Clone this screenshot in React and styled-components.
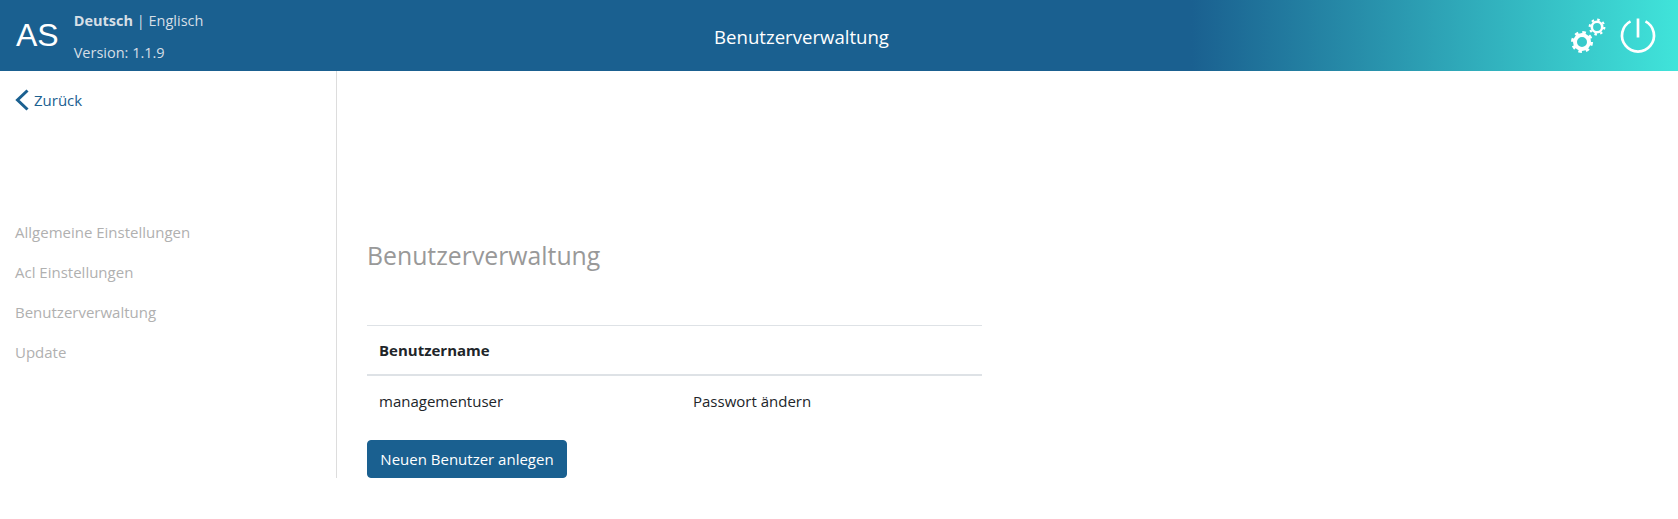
import styled, { createGlobalStyle } from "styled-components";

const GlobalStyle = createGlobalStyle`
  html, body {
    margin: 0;
    padding: 0;
    background: #fff;
    font-family: "Open Sans", "Noto Sans", sans-serif;
    font-size: 15px;
    color: #212529;
  }
`;

const Header = styled.header`
  height: 71px;
  display: grid;
  grid-template-columns: 1fr auto 1fr;
  align-items: center;
  padding: 0 21px 0 16px;
  box-sizing: border-box;
  background: linear-gradient(90deg, #1a6090 0%, #1a6090 71%, #40e4da 100%);
  color: #fff;
`;

const Brand = styled.div`
  display: flex;
  align-items: center;
  gap: 15px;
`;

const Logo = styled.div`
  font-family: "Liberation Sans", Arial, sans-serif;
  font-size: 32px;
`;

const Meta = styled.div`
  display: flex;
  flex-direction: column;
  gap: 12px;
  font-size: 14.5px;
  line-height: 20px;
  color: #d6dfe6;
  margin-top: 3px;
`;

const PageTitle = styled.div`
  font-size: 18.6px;
  margin: 2px 70px 0 0;
`;

const Actions = styled.div`
  display: flex;
  justify-content: flex-end;
  align-items: center;
  gap: 12px;
`;

const Layout = styled.div`
  display: flex;
`;

const Sidebar = styled.aside`
  width: 337px;
  box-sizing: border-box;
  border-right: 1px solid #ddd;
  padding: 18px 15px 0;
`;

const BackLink = styled.a`
  display: flex;
  align-items: center;
  gap: 5px;
  height: 22px;
  color: #1a6090;
  font-size: 15px;
`;

const NavList = styled.nav`
  display: flex;
  flex-direction: column;
  margin-top: 101px;
`;

const NavItem = styled.a`
  height: 40px;
  line-height: 40px;
  color: #b0b0b0;
  font-size: 15px;
`;

const Main = styled.main`
  flex: 1;
  padding: 166px 0 0 30px;
`;

const Heading = styled.h2`
  margin: 0;
  font-size: 24.8px;
  font-weight: 400;
  line-height: 36px;
  color: #999;
`;

const Table = styled.div`
  width: 615px;
  margin-top: 52px;
  border-top: 1px solid #dee2e6;
`;

const HeadRow = styled.div`
  height: 48px;
  display: flex;
  align-items: center;
  padding: 0 12px;
  font-weight: 700;
  border-bottom: 2px solid #dee2e6;
`;

const Row = styled.div`
  height: 54px;
  box-sizing: border-box;
  display: grid;
  grid-template-columns: 314px 1fr;
  align-items: center;
  padding: 0 12px 4px;
`;

const Button = styled.button`
  display: block;
  width: 200px;
  height: 38px;
  margin-top: 10px;
  padding: 0;
  border: 1px solid #1a6090;
  border-radius: 4px;
  background: #1a6090;
  color: #fff;
  font-family: inherit;
  font-size: 15px;
`;

const GearIcon = () => (
  <svg width="38" height="40" viewBox="0 0 38 40">
    <g fill="none" stroke="#fff">
      <circle cx="13" cy="26" r="7" strokeWidth="4" />
      <circle cx="13" cy="26" r="9.5" strokeWidth="3" strokeDasharray="3.5 3.96" />
      <circle cx="28" cy="11" r="5.2" strokeWidth="2.6" />
      <circle cx="28" cy="11" r="7.3" strokeWidth="2.2" strokeDasharray="2.5 3.23" />
    </g>
  </svg>
);

const PowerIcon = () => (
  <svg width="38" height="40" viewBox="0 0 38 40">
    <g fill="none" stroke="#fff" strokeWidth="2.7">
      <path d="M11.5 5.4 A16 16 0 1 0 26.5 5.4" />
      <path d="M19 2.5 V21.5" />
    </g>
  </svg>
);

const ChevronIcon = () => (
  <svg width="14" height="22" viewBox="0 0 14 22">
    <path d="M12.5 1.5 L2.5 11 L12.5 20.5" fill="none" stroke="#1a6090" strokeWidth="3" />
  </svg>
);

const navItems = ["Allgemeine Einstellungen", "Acl Einstellungen", "Benutzerverwaltung", "Update"];

const App = () => {
  return (
    <>
      <GlobalStyle />
      <Header>
        <Brand>
          <Logo>AS</Logo>
          <Meta>
            <div><b>Deutsch</b> | Englisch</div>
            <div>Version: 1.1.9</div>
          </Meta>
        </Brand>
        <PageTitle>Benutzerverwaltung</PageTitle>
        <Actions>
          <GearIcon />
          <PowerIcon />
        </Actions>
      </Header>
      <Layout>
        <Sidebar>
          <BackLink><ChevronIcon />Zurück</BackLink>
          <NavList>
            {navItems.map((item) => (
              <NavItem key={item}>{item}</NavItem>
            ))}
          </NavList>
        </Sidebar>
        <Main>
          <Heading>Benutzerverwaltung</Heading>
          <Table>
            <HeadRow>Benutzername</HeadRow>
            <Row>
              <span>managementuser</span>
              <span>Passwort ändern</span>
            </Row>
          </Table>
          <Button>Neuen Benutzer anlegen</Button>
        </Main>
      </Layout>
    </>
  );
};

export default App;
